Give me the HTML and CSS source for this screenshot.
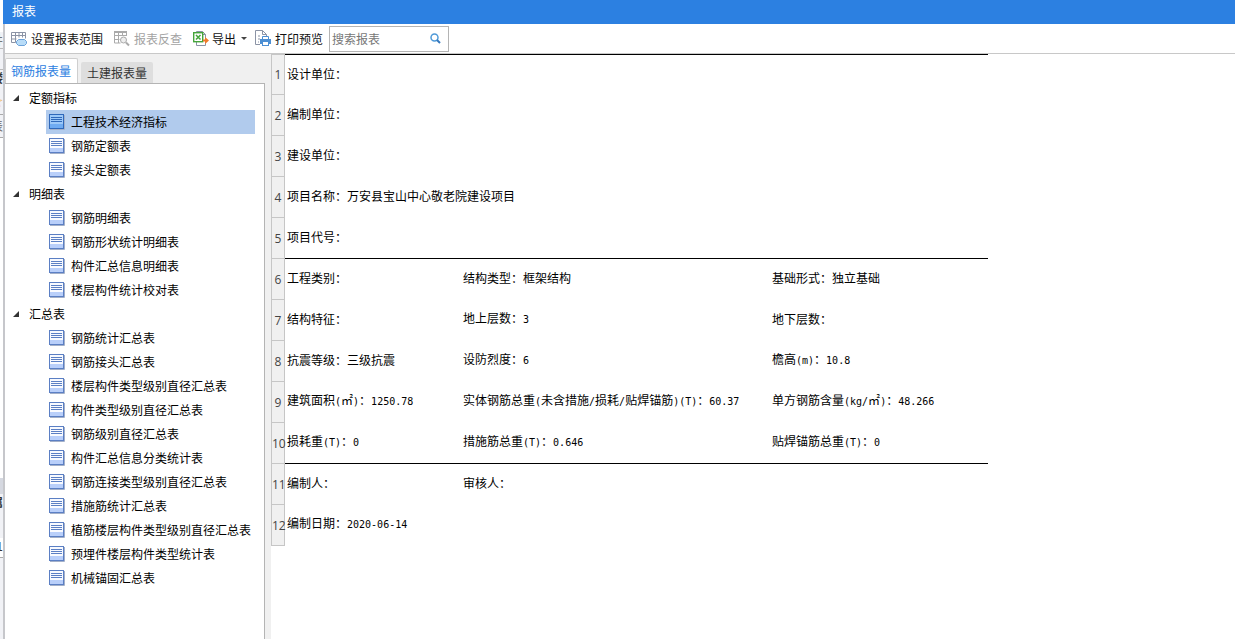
FILE: index.html
```
<!DOCTYPE html>
<html lang="zh-CN">
<head>
<meta charset="utf-8">
<title>报表</title>
<link rel="stylesheet" href="styles.css">
<script src="app.js" defer></script>
</head>
<body>
<svg class="defs" aria-hidden="true">
  <symbol id="sheet" viewBox="0 0 16 16">
    <path class="sheet-shade" d="M15.5 1v14.5H1"/>
    <rect class="sheet-page" x="0.5" y="0.5" width="14" height="14"/>
    <rect class="sheet-foot" x="1" y="10" width="13" height="4"/>
    <path class="sheet-lines" d="M2 3.5h11M2 5.5h11M2 7.5h11"/>
  </symbol>
</svg>
<div class="screen">
  <div class="behind" aria-hidden="true">
    <i class="b1"></i><i class="b2">井</i><i class="b3"></i><i class="b4">楼</i><i class="b5">☆</i><i class="b6">表</i><i class="b7"></i><i class="b8"></i><i class="b9">属</i><i class="b10">1</i>
  </div>
  <main class="window">
    <header class="title">报表</header>
    <div class="toolbar">
      <button class="tool scope">
        <svg width="17" height="16" viewBox="0 0 17 16"><path d="M.5 1.5h14v6M.5 1.5v10h4M.5 4.5h14M.5 8h5M4.5 1.5v10M8 1.5v5M11.5 1.5v5" fill="none" stroke="#8b93a5"/><path d="M7.5 8.5h6l2 2v2l-2 2h-6l-2-2v-2z" fill="#b8dcf8" stroke="#6ba1d8"/></svg>
        设置报表范围</button>
      <button class="tool check" disabled>
        <svg width="17" height="16" viewBox="0 0 17 16"><path d="M0 1h13" stroke="#aaa" stroke-width="2"/><path d="M.5 1v11h6M12.5 1v4M.5 4.5h12M.5 8.5h5M4.5 1v11M8.5 1v4" fill="none" stroke="#aaa"/><circle cx="9.5" cy="9" r="3" fill="#eee" stroke="#aaa"/><path d="M12 11.5l3 3" stroke="#aaa" stroke-width="2"/></svg>
        报表反查</button>
      <button class="tool export">
        <svg width="16" height="16" viewBox="0 0 16 16"><path d="M3.5 3V.5h6l3 3v11h-9V11M9.5 .5v3h3" fill="#fff" stroke="#8b93a5"/><rect x=".7" y="1.7" width="9" height="9" fill="#fff" stroke="#45a53b" stroke-width="1.4"/><path d="M3 4l4.500 4.500M7.500 4L3 8.500" stroke="#45a53b" stroke-width="1.5"/><path d="M10 8.500h2V6l4 3.500-4 3.500v-2.500h-2z" fill="#f07a2b"/></svg>
        导出<span class="caret"></span></button>
      <button class="tool print">
        <svg width="17" height="17" viewBox="0 0 17 17"><path d="M5 14.5H.5V.5h7l4 4v2M7.5 .5v4h4" fill="none" stroke="#8b93a5"/><path d="M3 6h2M3 9h2M3 12h1" stroke="#8b93a5"/><path d="M7.5 9V6.5h6V9" fill="#fff" stroke="#4c8fd4"/><rect x="5" y="9" width="11" height="5" fill="#4c8fd4"/><rect x="7.5" y="11.5" width="6" height="4" fill="#fff" stroke="#4c8fd4"/></svg>
        打印预览</button>
      <label class="search"><input type="text" placeholder="搜索报表" aria-label="搜索报表">
        <svg width="11" height="11" viewBox="0 0 11 11"><circle cx="4.5" cy="4.5" r="3.5" fill="none" stroke="#4f9ad8" stroke-width="1.5"/><path d="M7 7l3 3" stroke="#3478bd" stroke-width="2"/></svg>
      </label>
    </div>
    <div class="body">
      <aside class="side">
        <nav class="tabs"><button class="tab on">钢筋报表量</button><button class="tab">土建报表量</button></nav>
        <div class="tree" id="tree"></div>
      </aside>
      <section class="report">
        <table>
          <colgroup><col class="c-num"><col class="c-a"><col class="c-b"><col class="c-c"></colgroup>
          <tbody id="rows"></tbody>
        </table>
      </section>
    </div>
  </main>
</div>
</body>
</html>
```
FILE: app.js
```
const groups = [
  ["定额指标", ["工程技术经济指标", "钢筋定额表", "接头定额表"]],
  ["明细表", ["钢筋明细表", "钢筋形状统计明细表", "构件汇总信息明细表", "楼层构件统计校对表"]],
  ["汇总表", ["钢筋统计汇总表", "钢筋接头汇总表", "楼层构件类型级别直径汇总表", "构件类型级别直径汇总表", "钢筋级别直径汇总表", "构件汇总信息分类统计表", "钢筋连接类型级别直径汇总表", "措施筋统计汇总表", "植筋楼层构件类型级别直径汇总表", "预埋件楼层构件类型统计表", "机械锚固汇总表"]]
];
const rows = [
  ["设计单位："], ["编制单位："], ["建设单位："],
  ["项目名称：万安县宝山中心敬老院建设项目"], ["项目代号："],
  ["工程类别：", "结构类型：框架结构", "基础形式：独立基础"],
  ["结构特征：", "地上层数：3", "地下层数："],
  ["抗震等级：三级抗震", "设防烈度：6", "檐高(m)：10.8"],
  ["建筑面积(㎡)：1250.78", "实体钢筋总重(未含措施/损耗/贴焊锚筋)(T)：60.37", "单方钢筋含量(kg/㎡)：48.266"],
  ["损耗重(T)：0", "措施筋总重(T)：0.646", "贴焊锚筋总重(T)：0"],
  ["编制人：", "审核人："], ["编制日期：2020-06-14"]
];
document.getElementById("tree").innerHTML = groups.map(([name, items], g) =>
  `<div class="group"><span class="arrow"></span>${name}</div>` + items.map((t, i) =>
    `<button class="leaf${g + i === 0 ? " selected" : ""}"><svg width="16" height="16"><use href="#sheet"/></svg>${t}</button>`).join("")
).join("");
const half = t => t.replace(/[!-~]+/g, s => `<span class="half">${s}</span>`);
document.getElementById("rows").innerHTML = rows.map((cells, i) => {
  const span = i < 5 || i === 11;
  const tds = span ? `<td colspan="3">${half(cells[0])}</td>` :
    [0, 1, 2].map(c => `<td>${half(cells[c] || "")}</td>`).join("");
  return `<tr${[0, 5, 10].includes(i) ? ' class="ruled"' : ""}><th scope="row">${i + 1}</th>${tds}</tr>`;
}).join("");
```
FILE: styles.css
```
* { box-sizing: border-box; }
body { margin: 0; font: 12px/16px "Noto Sans CJK SC", sans-serif; color: #000; background: #fff; }
button { font: inherit; color: inherit; border: 0; margin: 0; padding: 0; background: none; text-align: left; white-space: nowrap; }
.defs { position: absolute; width: 0; height: 0; }
.screen { display: flex; height: 100vh; overflow: hidden; }
.behind { width: 3px; flex: none; background: #f1f2f6; overflow: hidden; display: flex; flex-direction: column; }
.behind i { display: flex; justify-content: flex-end; flex: none; font-style: normal; height: 16px; color: #333; }
.behind .b1 { height: 32px; background: #fff; }
.behind .b2 { color: #777; }
.behind .b3 { height: 22px; border-top: 1px solid #bbb; border-bottom: 1px solid #bbb; }
.behind .b4 { height: 20px; font-weight: 700; }
.behind .b5 { height: 24px; padding-top: 3px; color: #f0a830; }
.behind .b6 { height: 24px; padding-top: 3px; border-top: 1px solid #aaa; border-bottom: 1px solid #aaa; color: #666; }
.behind .b7 { height: 340px; background: #fff; }
.behind .b8 { height: 16px; background: #d5d8e0; }
.behind .b9 { height: 44px; font-weight: 700; }
.behind .b10 { height: 20px; border-bottom: 1px solid #aaa; background: #fff; }
.window { flex: 1; min-width: 0; display: flex; flex-direction: column; }
.title { height: 24px; padding: 3px 9px; background: #2c80e1; color: #fff; flex: none; }
.toolbar { height: 30px; flex: none; display: flex; align-items: center; border-left: 2px solid #c6c7cb; border-bottom: 1px solid #c8c8c8; padding-left: 6px; background: #fff; }
.tool { display: flex; align-items: center; gap: 3px; color: #111; }
.tool:disabled { color: #a3a3a3; }
.check, .export { margin-left: 11px; }
.print { margin-left: 8px; }
.caret { border: 3px solid transparent; border-top-color: #444; border-bottom: 0; margin-left: 2px; }
.search { display: flex; align-items: center; width: 120px; height: 26px; margin-left: 6px; padding: 0 7px 0 2px; border: 1px solid #b4b4b4; background: #fff; }
.search input { flex: 1; min-width: 0; border: 0; padding: 0; outline: 0; font: inherit; background: none; }
.search input::placeholder { color: #777; opacity: 1; }
.body { flex: 1; min-height: 0; display: flex; }
.side { width: 268px; flex: none; display: flex; flex-direction: column; background: #f0f0f0; padding-right: 6px; border-left: 2px solid #c6c7cb; }
.tabs { display: flex; align-items: flex-end; gap: 3px; height: 29px; padding-top: 4px; flex: none; }
.tab { height: 21px; padding: 0 6px; background: #dedede; border-radius: 2px 2px 0 0; color: #333; }
.tab.on { height: 25px; border: 1px solid #cfcfcf; border-bottom: 0; padding: 0 6px 0 5px; background: #fff; color: #2c80e1; }
.tree { flex: 1; border: solid #b4b4b4; border-width: 1px 1px 0 0; background: #fff; padding: 2px 8px 0 0; }
.group { display: flex; align-items: center; height: 24px; padding-left: 8px; gap: 10px; }
.arrow { width: 6px; height: 6px; background: #333; clip-path: polygon(100% 0, 100% 100%, 0 100%); }
.leaf { --page: #f8faff; --foot: #b9cffa; --ink: #5b7fc4; display: flex; align-items: center; gap: 6px; height: 24px; width: 209px; margin-left: 41px; padding-left: 3px; }
.leaf svg { flex: none; }
.leaf.selected { --page: #9cc8f8; --foot: #6fabf2; --ink: #2f68ba; background: #b1cbed; }
.sheet-page { fill: var(--page); stroke: var(--ink); }
.sheet-foot { fill: var(--foot); }
.sheet-shade { fill: none; stroke: #a3b0c9; }
.sheet-lines { fill: none; stroke: var(--ink); }
.report { flex: 1; min-width: 0; }
table { border-collapse: separate; border-spacing: 0; table-layout: fixed; width: 717px; }
.c-num { width: 14px; }
.c-a { width: 176px; }
.c-b { width: 309px; }
th { height: 41px; padding: 1px 0 0; background: #f0f0f0; border: solid #c6c6c6; border-width: 1px 1px 0; font: 12px/16px "Open Sans", sans-serif; color: #444; text-align: center; }
tr:first-child th { height: 40px; }
tr:last-child th { height: 42px; border-bottom-width: 1px; }
td { padding: 0 0 2px 2px; vertical-align: middle; white-space: nowrap; }
.ruled td { border-top: 1px solid #000; }
.half { font: 10px/16px "DejaVu Sans Mono", monospace; }
```
